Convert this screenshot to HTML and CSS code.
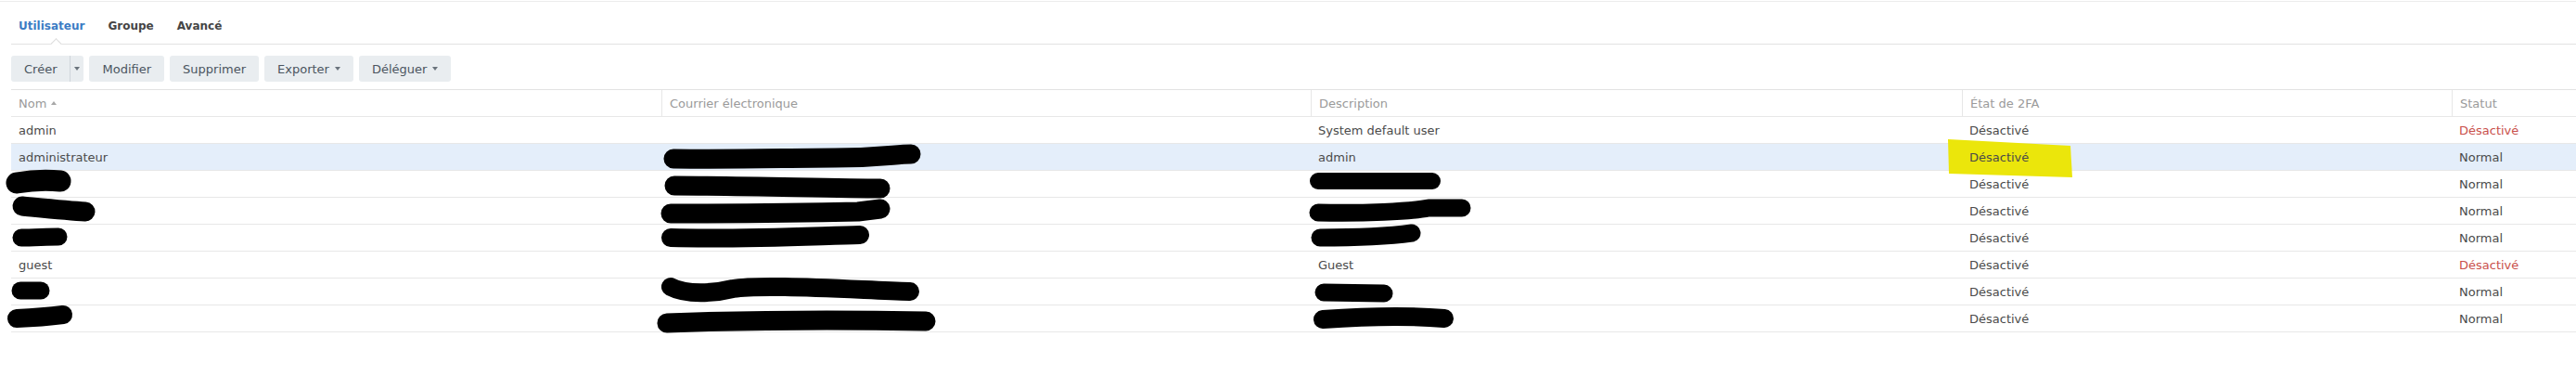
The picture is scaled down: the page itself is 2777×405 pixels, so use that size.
FILE: index.html
```html
<!DOCTYPE html>
<html lang="fr">

<head>
    <meta charset="UTF-8">
    <meta name="viewport" content="width=device-width, initial-scale=1.0">
    <title>Utilisateur</title>
    <link rel="stylesheet" href="styles.css">
</head>

<body>
    <div class="page">
        <div class="tabs">
            <div class="tab active">Utilisateur</div>
            <div class="tab">Groupe</div>
            <div class="tab">Avancé</div>
        </div>

        <div class="toolbar">
            <div class="split">
                <button class="btn btn-main">Créer</button>
                <button class="btn btn-drop"><span class="caret"></span></button>
            </div>
            <button class="btn">Modifier</button>
            <button class="btn">Supprimer</button>
            <button class="btn">Exporter <span class="caret"></span></button>
            <button class="btn">Déléguer <span class="caret"></span></button>
        </div>

        <div class="grid">
            <div class="row head">
                <div class="cell">Nom <span class="sort"></span></div>
                <div class="cell">Courrier électronique</div>
                <div class="cell">Description</div>
                <div class="cell">État de 2FA</div>
                <div class="cell">Statut</div>
            </div>
            <div class="row">
                <div class="cell">admin</div>
                <div class="cell"></div>
                <div class="cell">System default user</div>
                <div class="cell">Désactivé</div>
                <div class="cell off">Désactivé</div>
            </div>
            <div class="row selected">
                <div class="cell">administrateur</div>
                <div class="cell"></div>
                <div class="cell">admin</div>
                <div class="cell">Désactivé</div>
                <div class="cell">Normal</div>
            </div>
            <div class="row">
                <div class="cell"></div>
                <div class="cell"></div>
                <div class="cell"></div>
                <div class="cell">Désactivé</div>
                <div class="cell">Normal</div>
            </div>
            <div class="row">
                <div class="cell"></div>
                <div class="cell"></div>
                <div class="cell"></div>
                <div class="cell">Désactivé</div>
                <div class="cell">Normal</div>
            </div>
            <div class="row">
                <div class="cell"></div>
                <div class="cell"></div>
                <div class="cell"></div>
                <div class="cell">Désactivé</div>
                <div class="cell">Normal</div>
            </div>
            <div class="row">
                <div class="cell">guest</div>
                <div class="cell"></div>
                <div class="cell">Guest</div>
                <div class="cell">Désactivé</div>
                <div class="cell off">Désactivé</div>
            </div>
            <div class="row">
                <div class="cell"></div>
                <div class="cell"></div>
                <div class="cell"></div>
                <div class="cell">Désactivé</div>
                <div class="cell">Normal</div>
            </div>
            <div class="row">
                <div class="cell"></div>
                <div class="cell"></div>
                <div class="cell"></div>
                <div class="cell">Désactivé</div>
                <div class="cell">Normal</div>
            </div>
        </div>
    </div>

    <!-- annotations drawn over the screenshot -->
    <svg class="highlight" width="2777" height="405" viewBox="0 0 2777 405">
        <path d="M2100 150 L2232 157 L2234 191 L2101 187 Z" fill="#ebe60b" />
    </svg>

    <svg class="redact" width="2777" height="405" viewBox="0 0 2777 405" fill="none" stroke="#000"
        stroke-linecap="round" stroke-linejoin="round">
        <!-- Nom -->
        <path d="M18 197 C35 194 55 194 65 195" stroke-width="23" />
        <path d="M24 222 C45 224 75 227 92 228" stroke-width="21" />
        <path d="M23 256 C35 256 52 255 63 255" stroke-width="19" />
        <path d="M22 313 L44 313" stroke-width="19" />
        <path d="M18 343 C40 342 60 340 68 339" stroke-width="20" />
        <!-- Courrier -->
        <path d="M726 171 C800 172 850 170 900 170 S965 166 982 166" stroke-width="21" />
        <path d="M727 200 C800 200 900 203 949 203" stroke-width="21" />
        <path d="M723 230 C800 230 880 229 925 228 L949 225" stroke-width="21" />
        <path d="M723 256 C800 258 880 254 927 253" stroke-width="20" />
        <path d="M723 309 C740 318 770 316 790 311 C820 306 900 311 981 314" stroke-width="20" />
        <path d="M719 348 C800 345 900 344 998 346" stroke-width="21" />
        <!-- Description -->
        <path d="M1421 195 L1544 195" stroke-width="18" />
        <path d="M1421 229 C1470 230 1520 228 1540 224 L1576 224" stroke-width="19" />
        <path d="M1423 256 C1470 256 1500 254 1522 251" stroke-width="19" />
        <path d="M1427 315 L1492 316" stroke-width="19" />
        <path d="M1426 344 C1470 341 1520 340 1557 343" stroke-width="20" />
    </svg>
</body>

</html>
```

FILE: styles.css
```css
* {
    box-sizing: border-box;
}

body {
    margin: 0;
    font-family: "DejaVu Sans", Verdana, sans-serif;
    font-size: 13px;
    color: #4a4a4a;
    background-color: #fff;
}

.page {
    margin-top: 1px;
    padding-left: 12px;
    border-top: 1px solid #ececec;
}

/* tabs */

.tabs {
    display: flex;
    height: 46px;
    padding-top: 17px;
    border-bottom: 1px solid #e2e2e2;
}

.tab {
    position: relative;
    padding: 0 12.5px;
    font-size: 12px;
    font-weight: bold;
    line-height: 18px;
    color: #454545;
}

.tab:first-child {
    padding-left: 8px;
}

.tab.active {
    color: #3b7cc4;
}

.tab.active::after {
    content: "";
    position: absolute;
    left: calc(50% - 2px);
    bottom: -5px;
    width: 8px;
    height: 8px;
    background-color: #fff;
    border-top: 1px solid #dadada;
    border-left: 1px solid #dadada;
    transform: rotate(45deg);
}

/* toolbar */

.toolbar {
    display: flex;
    gap: 6px;
    height: 49px;
    padding: 12px 0 8px;
    border-bottom: 1px solid #e2e2e2;
}

.split {
    display: flex;
}

.btn {
    display: flex;
    align-items: center;
    gap: 6px;
    height: 28px;
    padding: 0 14px;
    border: none;
    border-radius: 3px;
    background-color: #e9edf0;
    color: #4b5560;
    font-family: inherit;
    font-size: 13px;
}

.btn-main {
    border-radius: 3px 0 0 3px;
}

.btn-drop {
    width: 15px;
    padding: 0;
    justify-content: center;
    border-left: 1px solid #cfd5da;
    border-radius: 0 3px 3px 0;
}

.caret {
    display: inline-block;
    width: 0;
    height: 0;
    border-top: 4px solid #6a737c;
    border-left: 3.5px solid transparent;
    border-right: 3.5px solid transparent;
}

/* grid */

.row {
    display: grid;
    grid-template-columns: 701px 700px 702px 528px 1fr;
    align-items: center;
    height: 29px;
    border-bottom: 1px solid #e7e7e7;
}

.cell {
    position: relative;
    z-index: 1;
    padding: 0 8px;
    white-space: nowrap;
    overflow: hidden;
}

.row.head {
    align-items: stretch;
    color: #9a9a9a;
}

.row.head .cell {
    display: flex;
    align-items: center;
    gap: 5px;
}

.row.head .cell + .cell {
    border-left: 1px solid #e7e7e7;
}

.sort {
    display: inline-block;
    width: 0;
    height: 0;
    border-bottom: 4px solid #a8a8a8;
    border-left: 3.5px solid transparent;
    border-right: 3.5px solid transparent;
}

.row.selected {
    background-color: #e4eefa;
}

.off {
    color: #c9504c;
}

/* annotations */

.highlight,
.redact {
    position: absolute;
    top: 0;
    left: 0;
    pointer-events: none;
}

.highlight {
    z-index: 0;
}

.redact {
    z-index: 2;
}
```
